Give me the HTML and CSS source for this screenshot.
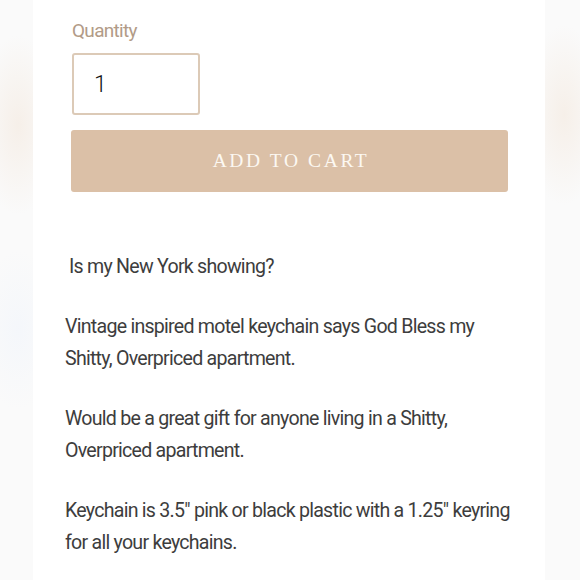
FILE: index.html
```html
<!DOCTYPE html>
<html>
<head>
<meta charset="utf-8">
<link rel="stylesheet" href="styles.css">
</head>
<body>
<div class="backdrop">
  <main class="card">
    <form class="buy">
      <label class="qty-label" for="qty">Quantity</label>
      <input class="qty-input" id="qty" type="text" value="1">
      <button class="add-btn" type="button">ADD TO CART</button>
    </form>
    <div class="desc">
      <p class="lead">Is my New York showing?</p>
      <p>Vintage inspired motel keychain says God Bless my Shitty, Overpriced apartment.</p>
      <p>Would be a great gift for anyone living in a Shitty, Overpriced apartment.</p>
      <p>Keychain is 3.5" pink or black plastic with a 1.25" keyring for all your keychains.</p>
    </div>
  </main>
</div>
</body>
</html>
```

FILE: styles.css
```css
html, body {
  margin: 0;
  padding: 0;
}
.backdrop {
  width: 580px;
  height: 580px;
  overflow: hidden;
  background:
    radial-gradient(ellipse 40px 90px at 18px 125px, rgba(243, 232, 221, 0.6), rgba(243, 232, 221, 0) 100%),
    radial-gradient(ellipse 40px 90px at 564px 115px, rgba(243, 232, 221, 0.6), rgba(243, 232, 221, 0) 100%),
    radial-gradient(ellipse 40px 80px at 18px 330px, rgba(243, 246, 251, 0.8), rgba(243, 246, 251, 0) 100%),
    #fafafa;
  display: flex;
  justify-content: center;
}
.card {
  width: 512px;
  margin-left: -2px;
  background: #fff;
  box-sizing: border-box;
  padding: 19px 0 0 0;
}
.buy {
  display: flex;
  flex-direction: column;
  align-items: flex-start;
  padding-left: 38px;
}
.qty-label {
  font-family: Roboto, "DejaVu Sans Condensed", sans-serif;
  font-weight: 400;
  font-size: 19px;
  letter-spacing: -0.7px;
  line-height: 24px;
  color: #b29b87;
  margin-bottom: 10px;
  margin-left: 1px;
}
.qty-input {
  width: 128px;
  height: 62px;
  box-sizing: border-box;
  border: 2px solid #dccab7;
  border-radius: 3px;
  padding: 0 0 0 20px;
  margin: 0 0 0 1px;
  font-family: Roboto, "DejaVu Sans Condensed", sans-serif;
  font-weight: 300;
  font-size: 23px;
  color: #111;
  background: #fff;
  outline: none;
}
.add-btn {
  margin-top: 15px;
  width: 437px;
  height: 62px;
  border: none;
  border-radius: 3px;
  background: #dbc0a7;
  color: #fcf8f2;
  font-family: "Liberation Serif", serif;
  font-size: 19.5px;
  letter-spacing: 2.6px;
  padding: 0 0 0 3px;
  cursor: pointer;
}
.desc {
  padding: 59px 0 0 32px;
  width: 456px;
  font-family: Roboto, "DejaVu Sans Condensed", sans-serif;
  font-weight: 400;
  font-size: 19.6px;
  letter-spacing: -0.75px;
  line-height: 32px;
  color: #3d3d3d;
}
.desc p {
  margin: 0 0 28px 0;
}
.desc .lead {
  padding-left: 4px;
}
```
